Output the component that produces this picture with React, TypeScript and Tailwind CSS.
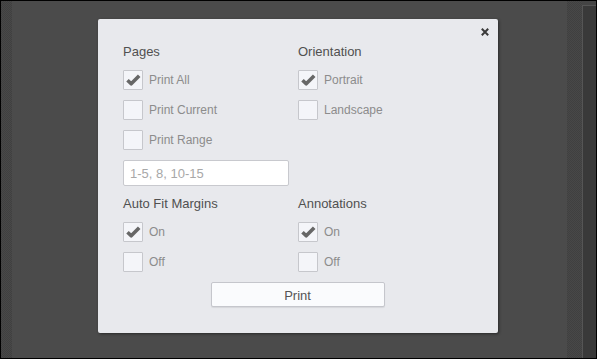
import type { ReactNode } from "react";

type Option = { label: string; checked?: boolean };

function CheckIcon() {
	return (
		<svg width="15" height="12" viewBox="0 0 15 12" className="block">
			<path d="M1.5 6.2 L5.2 9.8 L13.2 1.8" fill="none" stroke="#676767" strokeWidth="3.6" strokeLinejoin="round" />
		</svg>
	);
}

function CheckRow({ label, checked }: Option) {
	return (
		<div className="flex items-center h-5">
			<span className="w-5 h-5 flex items-center justify-center bg-[#f4f5f9] border border-[#c6c7cc] rounded-[1px]">
				{checked && <CheckIcon />}
			</span>
			<span className="ml-[6px] text-[12px] text-[#8c8c8c] leading-5">{label}</span>
		</div>
	);
}

function Group({ title, options, children }: { title: string; options: Option[]; children?: ReactNode }) {
	return (
		<div className="flex flex-col">
			<div className="text-[13px] leading-5 text-[#505050]">{title}</div>
			<div className="mt-2 flex flex-col gap-[10px]">
				{options.map((option) => (
					<CheckRow key={option.label} {...option} />
				))}
				{children}
			</div>
		</div>
	);
}

function PrintDialog() {
	return (
		<div className="relative w-[400px] h-[314px] bg-[#e8e9ed] rounded-[2px] shadow-[1px_1px_3px_rgba(0,0,0,0.45)] pt-[23px] px-[25px]">
			<button className="absolute left-[383px] top-[9px] w-[8px] h-[8px]">
				<svg width="8" height="8" viewBox="0 0 8 8" className="block">
					<path d="M0.8 0.8 L7.2 7.2 M7.2 0.8 L0.8 7.2" stroke="#3a3a3a" strokeWidth="2" />
				</svg>
			</button>
			<div className="grid grid-cols-[175px_175px]">
				<Group
					title="Pages"
					options={[{ label: "Print All", checked: true }, { label: "Print Current" }, { label: "Print Range" }]}
				>
					<input
						className="w-[166px] h-[26px] bg-white border border-[#c8c9ce] rounded-[2px] px-[6px] text-[13px] text-[#555] placeholder:text-[#a8a8a8] outline-none"
						placeholder="1-5, 8, 10-15"
					/>
				</Group>
				<Group title="Orientation" options={[{ label: "Portrait", checked: true }, { label: "Landscape" }]} />
			</div>
			<div className="grid grid-cols-[175px_175px] mt-2">
				<Group title="Auto Fit Margins" options={[{ label: "On", checked: true }, { label: "Off" }]} />
				<Group title="Annotations" options={[{ label: "On", checked: true }, { label: "Off" }]} />
			</div>
			<div className="flex justify-center mt-[10px] ml-[-1px]">
				<button className="w-[174px] h-[25px] pt-[2px] bg-[#fafbfd] border border-[#c5c6cc] rounded-[2px] shadow-[0_1px_1px_rgba(0,0,0,0.08)] text-[13px] text-[#555]">
					Print
				</button>
			</div>
		</div>
	);
}

export default function App() {
	return (
		<div className="w-[597px] h-[359px] bg-black p-[1px] flex overflow-hidden font-['Liberation_Sans',Arial,sans-serif]">
			<div className="w-[11px] h-full bg-[repeating-conic-gradient(#484848_0_25%,#404040_0_50%)] bg-[length:2px_2px]" />
			<div className="w-[555px] h-full bg-[#4b4b4b] pt-[18px] pl-[86px]">
				<PrintDialog />
			</div>
			<div className="w-[15px] h-full bg-[repeating-conic-gradient(#484848_0_25%,#404040_0_50%)] bg-[length:2px_2px]" />
			<div className="w-[14px] h-full pt-[4px] bg-[#444]">
				<div className="h-full bg-[#393939] border-l border-t border-[#555]" />
			</div>
		</div>
	);
}
